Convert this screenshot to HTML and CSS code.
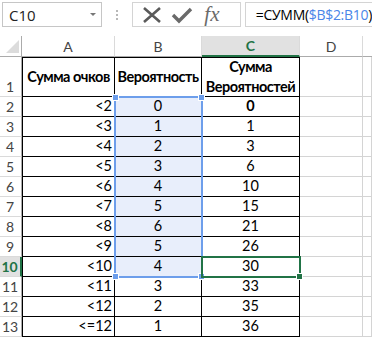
FILE: index.html
```html
<!DOCTYPE html>
<html lang="ru">
<head>
  <meta charset="UTF-8" />
  <title>Excel</title>
  <link rel="stylesheet" href="styles.css">
</head>
<body>

  <!-- Formula bar -->
  <div class="fbar">
    <div class="namebox">
      <span>C10</span>
      <span class="caret"></span>
    </div>
    <div class="grip"><i></i><i></i><i></i></div>
    <div class="btns">
      <svg width="22" height="18" viewBox="0 0 22 18"><path d="M3 2 L19 16 M19 2 L3 16" stroke="#5a5a5a" stroke-width="2.6" fill="none"/></svg>
      <svg width="24" height="18" viewBox="0 0 24 18"><path d="M3 9 L9 15 L21 3" stroke="#6a6a6a" stroke-width="3.4" fill="none"/></svg>
      <span class="fx">fx</span>
    </div>
    <div class="formula">=СУММ(<span class="ref">$B$2:B10</span>)</div>
  </div>

  <!-- Sheet -->
  <div class="sheet">
    <div class="corner"><span class="tri"></span></div>
    <div class="ch">A</div>
    <div class="ch">B</div>
    <div class="ch active">C</div>
    <div class="ch">D</div>
    <div class="ch last"></div>

    <div class="rh r1">1</div>
    <div class="c t a top mid b hd">Сумма очков</div>
    <div class="c t top mid b hd">Вероятность</div>
    <div class="c t top mid b hd">Сумма<br>Вероятностей</div>
    <div class="c"></div>
    <div class="c"></div>

    <div class="rh">2</div>
    <div class="c t a right">&lt;2</div>
    <div class="c t sel">0</div>
    <div class="c t b">0</div>
    <div class="c"></div><div class="c"></div>

    <div class="rh">3</div>
    <div class="c t a right">&lt;3</div>
    <div class="c t sel">1</div>
    <div class="c t">1</div>
    <div class="c"></div><div class="c"></div>

    <div class="rh">4</div>
    <div class="c t a right">&lt;4</div>
    <div class="c t sel">2</div>
    <div class="c t">3</div>
    <div class="c"></div><div class="c"></div>

    <div class="rh">5</div>
    <div class="c t a right">&lt;5</div>
    <div class="c t sel">3</div>
    <div class="c t">6</div>
    <div class="c"></div><div class="c"></div>

    <div class="rh">6</div>
    <div class="c t a right">&lt;6</div>
    <div class="c t sel">4</div>
    <div class="c t">10</div>
    <div class="c"></div><div class="c"></div>

    <div class="rh">7</div>
    <div class="c t a right">&lt;7</div>
    <div class="c t sel">5</div>
    <div class="c t">15</div>
    <div class="c"></div><div class="c"></div>

    <div class="rh">8</div>
    <div class="c t a right">&lt;8</div>
    <div class="c t sel">6</div>
    <div class="c t">21</div>
    <div class="c"></div><div class="c"></div>

    <div class="rh">9</div>
    <div class="c t a right">&lt;9</div>
    <div class="c t sel">5</div>
    <div class="c t">26</div>
    <div class="c"></div><div class="c"></div>

    <div class="rh active">10</div>
    <div class="c t a right">&lt;10</div>
    <div class="c t sel">4</div>
    <div class="c t">30</div>
    <div class="c"></div><div class="c"></div>

    <div class="rh">11</div>
    <div class="c t a right">&lt;11</div>
    <div class="c t">3</div>
    <div class="c t">33</div>
    <div class="c"></div><div class="c"></div>

    <div class="rh">12</div>
    <div class="c t a right">&lt;12</div>
    <div class="c t">2</div>
    <div class="c t">35</div>
    <div class="c"></div><div class="c"></div>

    <div class="rh">13</div>
    <div class="c t a right">&lt;=12</div>
    <div class="c t">1</div>
    <div class="c t">36</div>
    <div class="c"></div><div class="c"></div>

    <!-- range finder for $B$2:B10 -->
    <div class="range">
      <i class="h tl"></i><i class="h tr"></i><i class="h bl"></i><i class="h br"></i>
    </div>
    <!-- active cell C10 -->
    <div class="cursor"><i class="fill"></i></div>
  </div>

</body>
</html>
```

FILE: styles.css
```css
body {
  margin: 0; background: #fff; width: 372px; height: 337px; overflow: hidden;
  font-family: Lato, "Noto Sans", sans-serif; color: #000;
}

/* formula bar */
.fbar {
  display: flex; align-items: stretch; height: 25px; margin-top: 2px;
}
.namebox {
  width: 100px; margin-left: 2px; border: 1px solid #c6c6c6; box-sizing: border-box;
  display: flex; align-items: center; justify-content: space-between;
  padding: 0 5px 0 6px; font-size: 15px; color: #222;
  font-family: "Open Sans", sans-serif;
}
.caret {
  width: 0; height: 0; border-left: 3px solid transparent; border-right: 3px solid transparent;
  border-top: 3px solid #777;
}
.grip {
  width: 31px; display: flex; flex-direction: column; align-items: center;
  justify-content: center; gap: 2px;
}
.grip i { width: 2px; height: 2px; background: #b8b8b8; display: block; }
.btns {
  width: 109px; border: 1px solid #d4d4d4; box-sizing: border-box;
  display: flex; align-items: center; gap: 7px; padding-left: 8px;
}
.fx {
  font-family: "Liberation Serif", serif; font-style: italic; font-size: 21px;
  color: #6a6a6a; margin-left: 3px; line-height: 1;
}
.formula {
  flex: 1; margin-left: 4px; border: 1px solid #d4d4d4; border-right: none;
  display: flex; align-items: center; padding-left: 10px;
  font-family: "Open Sans", sans-serif; font-size: 14px; white-space: nowrap;
  letter-spacing: -0.3px;
}
.ref { color: #4a86e8; }

/* sheet grid */
.sheet {
  position: relative; margin-top: 9px;
  display: grid;
  grid-template-columns: 22px 93px 87px 98px 63px 1fr;
  grid-template-rows: 21px 40px repeat(12, 20px);
}
.corner, .ch, .rh {
  box-sizing: border-box; color: #444; font-size: 14px;
}
.corner {
  border-right: 1px solid #ababab; border-bottom: 1px solid #ababab;
  position: relative;
}
.tri {
  position: absolute; right: 2px; bottom: 3px; width: 0; height: 0;
  border-left: 13px solid transparent; border-bottom: 13px solid #dcdcdc;
}
.ch {
  border-right: 1px solid #dadada; border-bottom: 1px solid #ababab;
  display: flex; align-items: center; justify-content: center;
}
.ch.active {
  background: #e1e1e1; color: #217346; font-weight: bold;
  border-bottom: 2px solid #217346;
}
.ch.last { border-right: none; }
.rh {
  border-right: 1px solid #ababab; border-bottom: 1px solid #dadada;
  display: flex; align-items: center; justify-content: center; padding-right: 1px;
}
.rh.r1 { align-items: flex-end; padding-bottom: 1px; }
.rh.active {
  background: #e1e1e1; color: #217346; font-weight: bold;
  border-right: 2px solid #217346;
}

.c {
  box-sizing: border-box; border-right: 1px solid #d4d4d4; border-bottom: 1px solid #d4d4d4;
  display: flex; align-items: flex-end; justify-content: center;
  font-size: 14.5px; line-height: 18px; padding: 0 2px 1px;
  white-space: nowrap;
}
.c.t { border-right-color: #000; border-bottom-color: #000; }
.c.a { border-left: 1px solid #000; }
.c.top { border-top: 1px solid #000; }
.c.mid { align-items: center; text-align: center; line-height: 20px; padding-bottom: 0; }
.c.right { justify-content: flex-end; }
.c.sel { background: #e8eefb; }
.c.hd { letter-spacing: -0.5px; }
.b { font-weight: bold; }

/* overlays */
.range {
  position: absolute; left: 114px; top: 60px; width: 89px; height: 182px;
  box-sizing: border-box; border: 2px solid #6d9eeb;
}
.h {
  position: absolute; width: 5px; height: 5px; background: #6d9eeb;
  border: 1px solid #fff; display: block;
}
.tl { left: -4px; top: -4px; }
.tr { right: -4px; top: -4px; }
.bl { left: -4px; bottom: -4px; }
.br { right: -4px; bottom: -4px; }
.cursor {
  position: absolute; left: 201px; top: 220px; width: 100px; height: 22px;
  box-sizing: border-box; border: 2px solid #217346;
}
.fill {
  position: absolute; right: -4px; bottom: -4px; width: 5px; height: 5px;
  background: #217346; border: 1px solid #fff; display: block;
}
```
